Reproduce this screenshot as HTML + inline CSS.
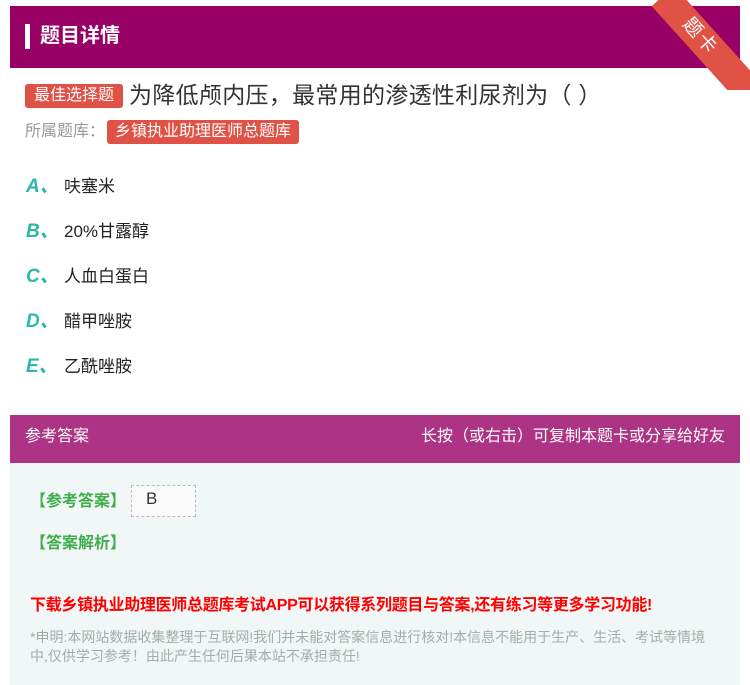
<!DOCTYPE html>
<html><head><meta charset="utf-8">
<style>
body{margin:0;width:750px;height:685px;background:#fff;font-family:"Liberation Sans","Noto Sans CJK SC",sans-serif;position:relative;overflow:hidden}
.hdr{position:absolute;left:10px;top:6px;width:730px;height:62px;background:#990066}
.hdr .bar{position:absolute;left:15px;top:18px;width:5px;height:25px;background:#fff}
.hdr .t{position:absolute;left:30px;top:17px;color:#fff;font-size:20px;font-weight:bold;line-height:26px}
.ribbon{position:absolute;left:640px;top:0;width:110px;height:90px;overflow:hidden}
.ribbon div{position:absolute;left:34px;top:-14px;width:140px;height:30px;background:#e05246;transform:rotate(48deg);transform-origin:0 0;color:#fff;font-size:19px;text-align:center;line-height:30px;text-indent:-30px;letter-spacing:2px}
.tag{display:inline-block;background:#e05246;color:#fff;border-radius:3px}
.q{position:absolute;left:25px;top:80px;font-size:23px;color:#333;line-height:30px;letter-spacing:0.3px}
.q .tag{font-size:16px;line-height:24px;padding:0 9px;vertical-align:3px;margin-right:6px;letter-spacing:0}
.lib{position:absolute;left:25px;top:120px;font-size:16px;color:#999;line-height:23px}
.lib .tag{font-size:16px;padding:0 8px;line-height:24px;margin-left:2px}
.opt{position:absolute;left:26px;font-size:17px;color:#222;line-height:24px}
.opt b{color:#2cb8a8;font-style:italic;font-size:19px;display:inline-block;width:38px}
.ans{position:absolute;left:10px;top:415px;width:730px;height:270px;background:#f0f7f6}
.ah{height:48px;background:#ad3384;color:#fff;font-size:16px;line-height:44px;padding:0 15px}
.ah span{float:right}
.g{position:absolute;color:#3fae4c;font-size:16px;font-weight:bold}
.red{position:absolute;left:20px;top:176px;color:#f00;font-size:16px;font-weight:bold;letter-spacing:-0.3px;white-space:nowrap}
.note{position:absolute;left:20px;top:213px;width:690px;color:#aaa;font-size:14px;line-height:19px}
.bimg{position:absolute;left:121px;top:70px;width:63px;height:30px;background:#fafafa;border:1px dashed #bbb;font-size:17px;color:#333;text-indent:14px;line-height:26px}
</style></head><body>
<div class="hdr"><div class="bar"></div><div class="t">题目详情</div></div>
<div class="ribbon"><div>题卡</div></div>
<div class="q"><span class="tag">最佳选择题</span>为降低颅内压，最常用的渗透性利尿剂为（ ）</div>
<div class="lib">所属题库：<span class="tag">乡镇执业助理医师总题库</span></div>
<div class="opt" style="top:175px"><b>A、</b>呋塞米</div>
<div class="opt" style="top:220px"><b>B、</b>20%甘露醇</div>
<div class="opt" style="top:265px"><b>C、</b>人血白蛋白</div>
<div class="opt" style="top:310px"><b>D、</b>醋甲唑胺</div>
<div class="opt" style="top:355px"><b>E、</b>乙酰唑胺</div>
<div class="ans">
<div class="ah">参考答案<span>长按（或右击）可复制本题卡或分享给好友</span></div>
<div class="g" style="left:20px;top:72px">【参考答案】</div>
<div class="bimg">B</div>
<div class="g" style="left:20px;top:114px">【答案解析】</div>
<div class="red">下载乡镇执业助理医师总题库考试APP可以获得系列题目与答案,还有练习等更多学习功能!</div>
<div class="note">*申明:本网站数据收集整理于互联网!我们并未能对答案信息进行核对!本信息不能用于生产、生活、考试等情境中,仅供学习参考！由此产生任何后果本站不承担责任!</div>
</div>
</body></html>
